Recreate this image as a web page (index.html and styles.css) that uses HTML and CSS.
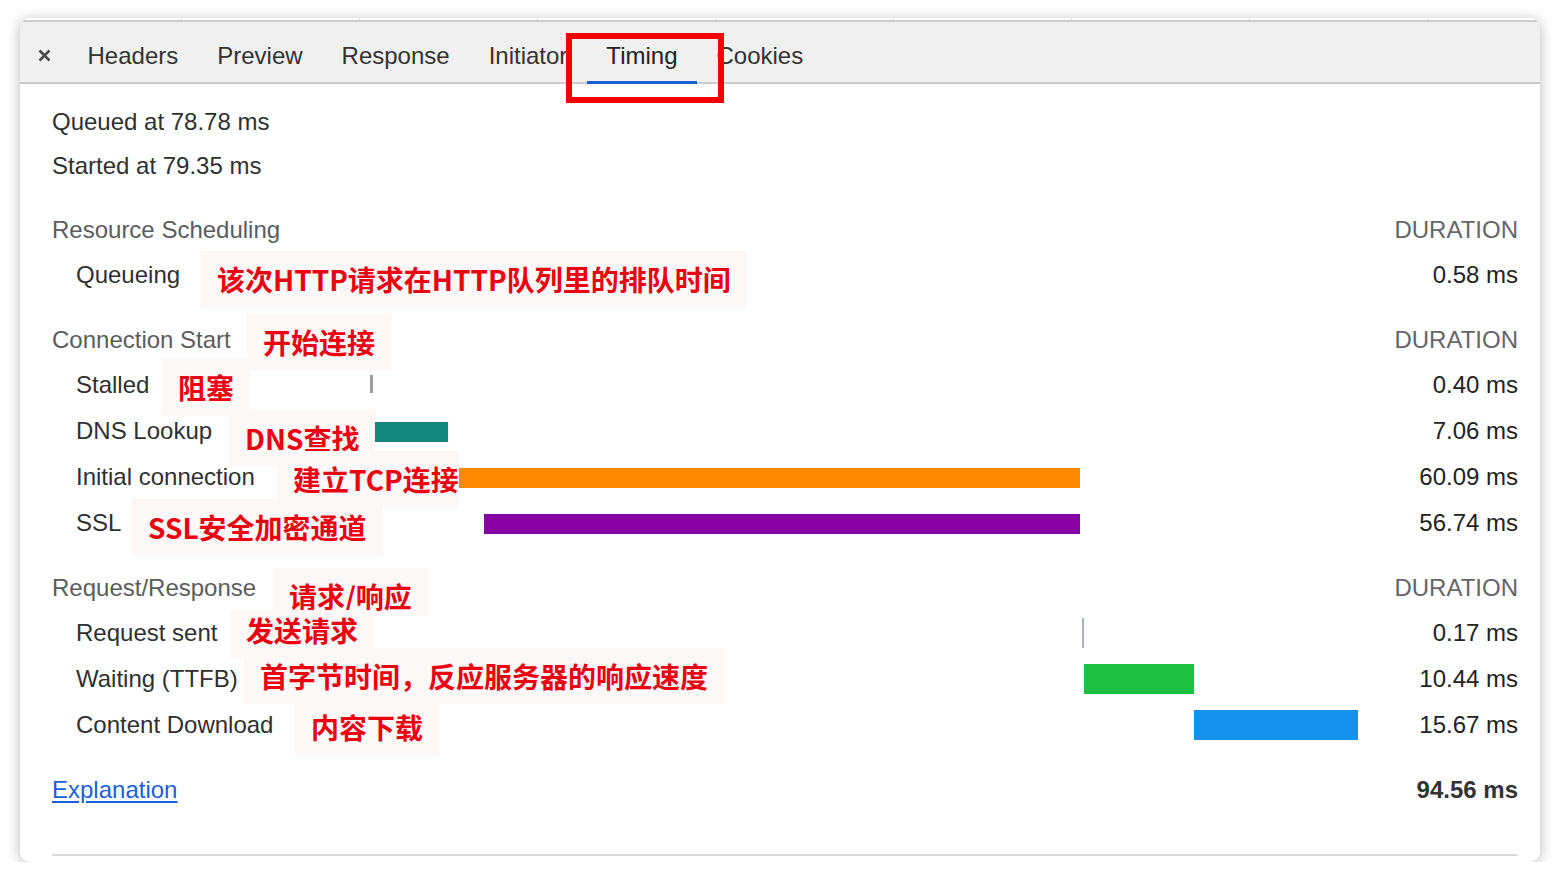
FILE: index.html
```html
<!DOCTYPE html>
<html lang="zh-CN">
<head>
<meta charset="utf-8">
<title>Timing</title>
<link rel="stylesheet" href="styles.css">
</head>
<body>
<div class="window">
  <div class="strip">
    <span class="cell first"></span><span class="cell"></span><span class="cell"></span><span class="cell"></span><span class="cell"></span><span class="cell"></span><span class="cell"></span><span class="cell"></span><span class="cell last"></span>
  </div>
  <div class="tabbar">
    <div class="tab close">
      <svg width="13" height="13" viewBox="0 0 13 13"><path d="M1.5 1.5 L11.5 11.5 M11.5 1.5 L1.5 11.5" stroke="#4a4a4a" stroke-width="2.6" stroke-linecap="butt"/></svg>
    </div>
    <div class="tab">Headers</div>
    <div class="tab">Preview</div>
    <div class="tab">Response</div>
    <div class="tab">Initiator</div>
    <div class="tab active">Timing</div>
    <div class="tab">Cookies</div>
  </div>

  <div class="content">
    <div class="meta">Queued at 78.78 ms</div>
    <div class="meta">Started at 79.35 ms</div>

    <div class="section">
      <div class="row head"><div class="label">Resource Scheduling</div><div class="track"></div><div class="dur">DURATION</div></div>
      <div class="row"><div class="label sub">Queueing</div><div class="track"><span class="bar queue" style="left:2px;width:3px"></span></div><div class="dur">0.58 ms</div></div>
    </div>

    <div class="section">
      <div class="row head"><div class="label">Connection Start</div><div class="track"></div><div class="dur">DURATION</div></div>
      <div class="row"><div class="label sub">Stalled</div><div class="track"><span class="bar stalled" style="left:6px;width:3px"></span></div><div class="dur">0.40 ms</div></div>
      <div class="row"><div class="label sub">DNS Lookup</div><div class="track"><span class="bar dns" style="left:10px;width:74px"></span></div><div class="dur">7.06 ms</div></div>
      <div class="row"><div class="label sub">Initial connection</div><div class="track"><span class="bar conn" style="left:94px;width:622px"></span></div><div class="dur">60.09 ms</div></div>
      <div class="row"><div class="label sub">SSL</div><div class="track"><span class="bar ssl" style="left:120px;width:596px"></span></div><div class="dur">56.74 ms</div></div>
    </div>

    <div class="section">
      <div class="row head"><div class="label">Request/Response</div><div class="track"></div><div class="dur">DURATION</div></div>
      <div class="row"><div class="label sub">Request sent</div><div class="track"><span class="bar sent" style="left:718px;width:2px"></span></div><div class="dur">0.17 ms</div></div>
      <div class="row"><div class="label sub">Waiting (TTFB)</div><div class="track"><span class="bar wait" style="left:720px;width:110px"></span></div><div class="dur">10.44 ms</div></div>
      <div class="row"><div class="label sub">Content Download</div><div class="track"><span class="bar down" style="left:830px;width:164px"></span></div><div class="dur">15.67 ms</div></div>
    </div>

    <div class="footer">
      <a class="link" href="#">Explanation</a>
      <span class="total">94.56 ms</span>
    </div>
    <div class="rule"></div>
  </div>

  <div class="redbox"></div>

  <div class="note n1">该次HTTP请求在HTTP队列里的排队时间</div>
  <div class="note n2">开始连接</div>
  <div class="note n3">阻塞</div>
  <div class="note n4">DNS查找</div>
  <div class="note n5">建立TCP连接</div>
  <div class="note n6">SSL安全加密通道</div>
  <div class="note n7">请求/响应</div>
  <div class="note n8">发送请求</div>
  <div class="note n9">首字节时间，反应服务器的响应速度</div>
  <div class="note n10">内容下载</div>
</div>
</body>
</html>
```

FILE: styles.css
```css
html, body {
  margin: 0;
  padding: 0;
  background: #ffffff;
}

body {
  font-family: "Liberation Sans", Arial, sans-serif;
  color: #303030;
}

.window {
  position: relative;
  margin: 18px 0 0 20px;
  width: 1520px;
  height: 844px;
  background: #ffffff;
  border-radius: 10px;
  box-shadow: 0 2px 14px rgba(0, 0, 0, 0.28);
  overflow: hidden;
}

/* thin column-header strip above the tabs */
.strip {
  display: flex;
  height: 2px;
  border-bottom: 2px solid #cdcdcd;
  background: #ffffff;
}
.strip .cell {
  width: 178px;
  border-right: 1px solid #dcdcdc;
  box-sizing: border-box;
}
.strip .cell.first { width: 162px; }
.strip .cell.last { flex: 1; border-right: none; }

/* tab bar */
.tabbar {
  display: flex;
  height: 60px;
  background: #f0f0f0;
  border-bottom: 2px solid #cbcbcb;
}
.tab {
  position: relative;
  display: flex;
  align-items: center;
  padding: 8px 19.5px 0 19.5px;
  font-size: 24px;
  color: #333333;
  white-space: nowrap;
}
.tab.close {
  width: 48px;
  padding: 6px 0 0 0;
  justify-content: center;
  box-sizing: border-box;
}
.tab.active {
  color: #222222;
}
.tab.active::after {
  content: "";
  position: absolute;
  left: 0;
  right: 0;
  bottom: -2px;
  height: 3px;
  background: #1a5fd8;
}

/* content */
.content {
  padding: 16px 22px 0 32px;
}
.meta {
  height: 44px;
  line-height: 44px;
  font-size: 24px;
  color: #303030;
}

.section {
  margin-top: 20px;
}

.row {
  display: grid;
  grid-template-columns: 312px 993px 1fr;
  height: 46px;
  align-items: center;
  font-size: 24px;
}
.row.head {
  height: 44px;
}
.label {
  color: #303030;
  white-space: nowrap;
}
.row.head .label {
  color: #5c5c5c;
}
.label.sub {
  padding-left: 24px;
}
.dur {
  text-align: right;
  color: #222222;
  white-space: nowrap;
}
.row.head .dur {
  color: #666666;
}

.track {
  position: relative;
  height: 100%;
}
.bar {
  position: absolute;
  top: 50%;
  height: 20px;
  transform: translateY(-50%);
}
.bar.queue {
  height: 6px;
  margin-top: -10px;
  border: 1px solid #c8c8c8;
  background: #ffffff;
  box-sizing: border-box;
}
.bar.stalled { height: 18px; background: #9e9e9e; margin-top: -1px; }
.bar.dns { background: #13877a; margin-top: 1px; }
.bar.conn { background: #ff8a00; margin-top: 1px; }
.bar.ssl { background: #8900a2; margin-top: 1px; }
.bar.sent { height: 30px; background: #a5b3bc; }
.bar.wait { height: 30px; background: #1cc143; }
.bar.down { height: 30px; background: #1592ee; }

.footer {
  margin-top: 20px;
  height: 44px;
  display: flex;
  align-items: center;
  justify-content: space-between;
  font-size: 24px;
}
.link {
  color: #1c5fd6;
  text-decoration: underline;
  text-underline-offset: 3px;
}
.total {
  font-weight: 700;
  color: #333333;
}

.rule {
  margin-top: 42px;
  height: 2px;
  background: #dadada;
}

/* overlays: red highlight and annotations */
.redbox {
  position: absolute;
  left: 546px;
  top: 15px;
  width: 158px;
  height: 70px;
  border: 6px solid #f50000;
  box-sizing: border-box;
}

.note {
  position: absolute;
  padding: 12px 16px;
  line-height: 32px;
  font-family: "Noto Sans CJK SC", "Noto Sans", sans-serif;
  font-weight: 700;
  font-size: 28px;
  color: #ea0010;
  background: #fcf8f8;
  white-space: nowrap;
}
.n1 { left: 181px; top: 233px; }
.n2 { left: 227px; top: 296px; }
.n3 { left: 142px; top: 341px; }
.n4 { left: 209px; top: 392px; }
.n5 { left: 257px; top: 433px; padding-right: 0; }
.n6 { left: 112px; top: 481px; }
.n7 { left: 253px; top: 550px; padding-bottom: 4px; }
.n8 { left: 210px; top: 592px; padding-top: 4px; }
.n9 { left: 224px; top: 630px; }
.n10 { left: 275px; top: 681px; }
```
